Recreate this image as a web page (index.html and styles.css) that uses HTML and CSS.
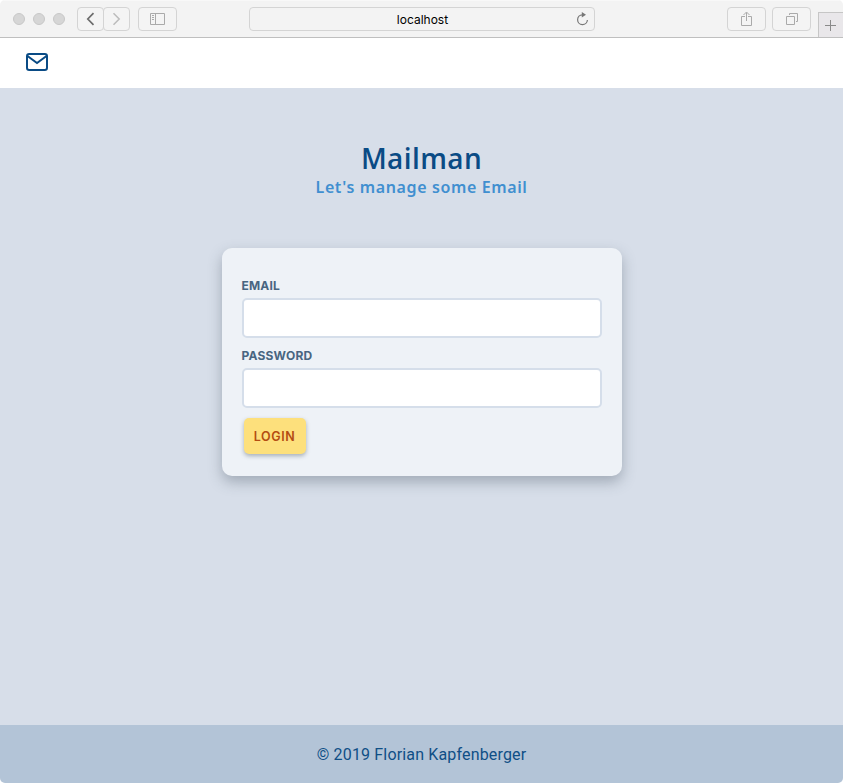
FILE: index.html
```html
<!DOCTYPE html>
<html lang="en">
<head>
<meta charset="utf-8">
<title>Mailman</title>
<link rel="stylesheet" href="styles.css">
</head>
<body>
<div class="window">
  <header class="chrome">
    <div class="lights"><i></i><i></i><i></i></div>
    <div class="nav">
      <button class="tool" aria-label="Back"><svg width="10" height="14" viewBox="0 0 10 14"><path d="M7.5 1.2 1.8 7l5.7 5.8" stroke="#6c6c6c" stroke-width="1.7"/></svg></button>
      <button class="tool" aria-label="Forward"><svg width="10" height="14" viewBox="0 0 10 14"><path d="M1.5 1.2 7.2 7l-5.7 5.8" stroke="#bcbcbc" stroke-width="1.5"/></svg></button>
    </div>
    <button class="tool wide" aria-label="Sidebar"><svg width="15" height="12" viewBox="0 0 15 12"><path d="M.5.5h14v11H.5zM5.5.5v11M2 2.5h2M2 4.5h2M2 6.5h2" stroke="#aaa"/></svg></button>
    <div class="address"><span>localhost</span>
      <svg class="reload" width="13" height="14" viewBox="0 0 13 14"><path d="M7.5 2.8H6.4A4.9 4.9 0 1 0 11.4 8" stroke="#777" stroke-width="1.2"/><path d="M5.8 0 10 2.8 5.8 5.6z" fill="#777"/></svg>
    </div>
    <button class="tool wide share" aria-label="Share"><svg width="11" height="16" viewBox="0 0 11 16"><path d="M4 5.5H.5v9h10v-9H7M5.5 10V1.5M2.5 4l3-3 3 3" stroke="#aaa"/></svg></button>
    <button class="tool wide tabs" aria-label="Tabs"><svg width="12" height="12" viewBox="0 0 12 12"><path d="M.5 3.5h8v8h-8zM3.5 2V.5h8v8H10" stroke="#aaa"/></svg></button>
    <button class="newtab" aria-label="New tab"><svg width="11" height="11" viewBox="0 0 11 11"><path d="M5.5 0v11M0 5.5h11" stroke="#8a8a8a"/></svg></button>
  </header>
  <nav class="topbar">
    <svg width="24" height="24" viewBox="0 0 24 24"><rect x="2" y="4" width="20" height="16" rx="2.2" stroke="#0a4b85" stroke-width="2"/><path d="m2.5 6 9.5 7 9.5-7" stroke="#0a4b85" stroke-width="2"/></svg>
  </nav>
  <main>
    <h1>Mailman</h1>
    <h2>Let's manage some Email</h2>
    <form class="card">
      <label for="email">EMAIL</label>
      <input id="email" type="email">
      <label for="password">PASSWORD</label>
      <input id="password" type="password">
      <button class="login" type="button"><span>LOGIN</span></button>
    </form>
  </main>
  <footer><span>© 2019 Florian Kapfenberger</span></footer>
</div>
</body>
</html>
```
FILE: styles.css
```css
* { box-sizing: border-box; }
body { margin: 0; background: #fff; font-family: Inter, sans-serif; }
svg { display: block; fill: none; }
button { font: inherit; padding: 0; }
.window { height: 783px; display: flex; flex-direction: column; overflow: hidden; border-radius: 5px; }
.chrome { height: 38px; flex: none; display: flex; align-items: center; background: #f3f3f3; border-bottom: 1px solid #bfbfbf; border-top: 1px solid #f8f8f8; padding-left: 13px; }
.lights { display: flex; gap: 8px; width: 64px; }
.lights i { width: 12px; height: 12px; border-radius: 50%; background: #d6d6d6; border: 1px solid #c8c8c8; }
.nav { display: flex; margin-right: 8px; }
.tool { height: 24px; width: 27px; display: flex; align-items: center; justify-content: center; background: #f4f4f4; border: 1px solid #d4d4d4; border-radius: 4px; }
.nav .tool + .tool { margin-left: -1px; }
.tool.wide { width: 39px; }
.address { position: relative; width: 346px; height: 24px; margin-left: 72px; border: 1px solid #d4d4d4; border-radius: 4px; display: flex; align-items: center; justify-content: center; font: 12px/22px Inter, sans-serif; color: #000; }
.address span { padding: 2px 0 0 1px; }
.reload { position: absolute; right: 5px; top: 4px; }
.share { margin-left: 132px; }
.share svg { margin-top: -1px; }
.tabs { margin-left: 6px; }
.newtab { width: 25px; height: 25px; margin-left: 7px; align-self: flex-end; display: flex; align-items: center; justify-content: center; padding: 0 2px 0 0; background: #e9e7ea; border: solid #c6c6c6; border-width: 1px 0 0 1px; }
.newtab svg { margin-top: 1px; }
.topbar { height: 50px; flex: none; display: flex; align-items: center; padding: 0 0 2px 25px; background: #fff; }
main { flex: 1; background: #d7dee9; display: flex; flex-direction: column; align-items: center; padding-top: 49px; }
h1 { margin: 0; height: 40px; font: 600 28px/42px "Open Sans", "Noto Sans", sans-serif; letter-spacing: .4px; color: #0a4b85; }
h2 { margin: 0; font: 600 16px/20px "Noto Sans", sans-serif; letter-spacing: .62px; color: #408fd0; }
.card { width: 400px; height: 228px; margin-top: 51px; padding: 30px 20px 0; border-radius: 10px; background: #eef2f7; box-shadow: 0 6px 14px rgba(60, 75, 90, .35); display: flex; flex-direction: column; align-items: flex-start; }
label { height: 20px; font: 700 12px/16px Inter, sans-serif; letter-spacing: .2px; color: #486581; }
input { width: 360px; height: 40px; margin: 0 0 10px; border: 2px solid #d5deea; border-radius: 5px; background: #fff; }
.login { width: 62px; height: 36px; margin-left: 2px; border: 0; border-radius: 5px; background: #fde07c; box-shadow: 0 2px 4px rgba(60, 75, 90, .4); color: #b44d12; font: 600 12.5px/36px Inter, sans-serif; letter-spacing: .6px; }
.login span { display: block; height: 36px; line-height: 38px; }
footer { height: 58px; flex: none; background: #b3c4d7; display: flex; align-items: center; justify-content: center; padding-top: 2px; font: 400 16px/20px Roboto, sans-serif; letter-spacing: .16px; color: #0f4f86; }
```
